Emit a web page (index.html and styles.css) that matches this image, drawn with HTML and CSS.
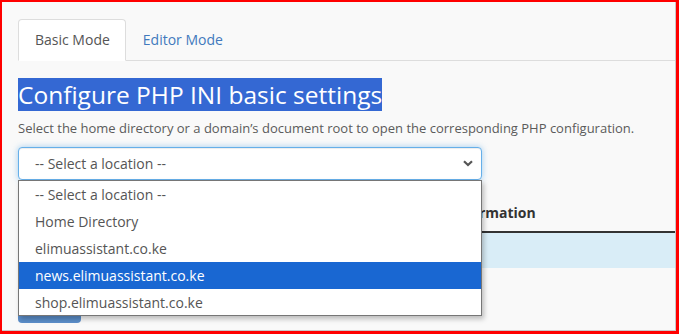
FILE: index.html
```html
<!DOCTYPE html>
<html lang="en">
<head>
    <meta charset="UTF-8">
    <title>MultiPHP INI Editor</title>
    <link rel="stylesheet" href="styles.css">
</head>
<body>
    <div class="frame">
        <div class="page">
            <ul class="tabs">
                <li class="tab active">Basic Mode</li>
                <li class="tab">Editor Mode</li>
            </ul>

            <h1 class="title"><span class="selected-text">Configure PHP INI basic settings</span></h1>
            <p class="help">Select the home directory or a domain’s document root to open the corresponding PHP configuration.</p>

            <div class="location-select">
                <span>-- Select a location --</span>
                <svg class="chevron" width="10" height="7" viewBox="0 0 10 7">
                    <path d="M1 1.2 L5 5 L9 1.2" fill="none" stroke="#555" stroke-width="2.2"/>
                </svg>
            </div>

            <!-- open dropdown of the select -->
            <ul class="location-list">
                <li>-- Select a location --</li>
                <li>Home Directory</li>
                <li>elimuassistant.co.ke</li>
                <li class="highlighted">news.elimuassistant.co.ke</li>
                <li>shop.elimuassistant.co.ke</li>
            </ul>

            <table class="settings-table">
                <thead>
                    <tr>
                        <th class="col-directive"></th>
                        <th>Information</th>
                    </tr>
                </thead>
                <tbody>
                    <tr class="info-row">
                        <td colspan="2"></td>
                    </tr>
                </tbody>
            </table>

            <button class="apply-btn" aria-label="Apply"></button>
        </div>
    </div>
</body>
</html>
```

FILE: styles.css
```css
body {
    margin: 0;
    font-family: "Open Sans", Arial, sans-serif;
    color: #555;
}
.frame {
    height: 334px;
    box-sizing: border-box;
    border: solid #ff0000;
    border-width: 2px 3px 3px 2px;
    overflow: hidden;
}
.page {
    position: relative;
    height: 100%;
    box-sizing: border-box;
    padding: 17px 0 0 16px;
    background-color: #f9f9f9;
    border-right: 1px solid #c8c8c8;
    border-bottom: 1px solid #c8c8c8;
}
.tabs {
    display: flex;
    margin: 0;
    padding: 0;
    list-style: none;
    border-bottom: 1px solid #ddd;
}
.tab {
    margin-right: 0;
    margin-bottom: -1px;
    padding: 10px 15px 10px 16px;
    font-size: 14px;
    line-height: 20px;
    color: #4279bd;
    border: 1px solid transparent;
    border-radius: 4px 4px 0 0;
}
.tab.active {
    color: #555;
    background-color: #fff;
    border-color: #ddd;
    border-bottom-color: #fff;
}
.title {
    margin: 17px 0 0 0;
    font-size: 24.5px;
    font-weight: normal;
    line-height: 33px;
}
.selected-text {
    background-color: #3468d3;
    color: #fff;
}
.help {
    margin: 8px 0 0 0;
    font-size: 13px;
    line-height: 18px;
    color: #5b5b5b;
}
.location-select {
    display: flex;
    align-items: center;
    justify-content: space-between;
    width: 464px;
    height: 33px;
    box-sizing: border-box;
    margin-top: 10px;
    padding: 0 8px 0 16px;
    font-size: 14px;
    color: #555;
    background-color: #fff;
    border: 1px solid #66afe9;
    border-radius: 4px;
    box-shadow: inset 0 1px 1px rgba(0, 0, 0, 0.075), 0 0 6px rgba(102, 175, 233, 0.6);
}
.location-list {
    position: absolute;
    left: 16px;
    top: 178px;
    z-index: 2;
    width: 464px;
    height: 136px;
    box-sizing: border-box;
    margin: 0;
    padding: 0;
    list-style: none;
    overflow: hidden;
    background-color: #fff;
    border: 1px solid #767676;
    box-shadow: 2px 3px 5px rgba(0, 0, 0, 0.25);
}
.location-list li {
    height: 27px;
    padding-left: 16px;
    font-size: 14px;
    line-height: 27px;
    color: #555;
}
.location-list li.highlighted {
    background-color: #1967d2;
    color: #fff;
}
.settings-table {
    width: 657px;
    margin-top: 15px;
    border-collapse: collapse;
    font-size: 14px;
}
.settings-table th {
    padding: 8px 8px;
    text-align: left;
    line-height: 20px;
    color: #333;
    border-bottom: 2px solid #333;
}
.col-directive {
    width: 409px;
}
.info-row td {
    height: 35px;
    padding: 0;
    background-color: #d9edf7;
}
.apply-btn {
    display: block;
    margin-top: 21px;
    width: 63px;
    height: 34px;
    background-color: #5b8eca;
    border: none;
    border-radius: 4px;
}
```
